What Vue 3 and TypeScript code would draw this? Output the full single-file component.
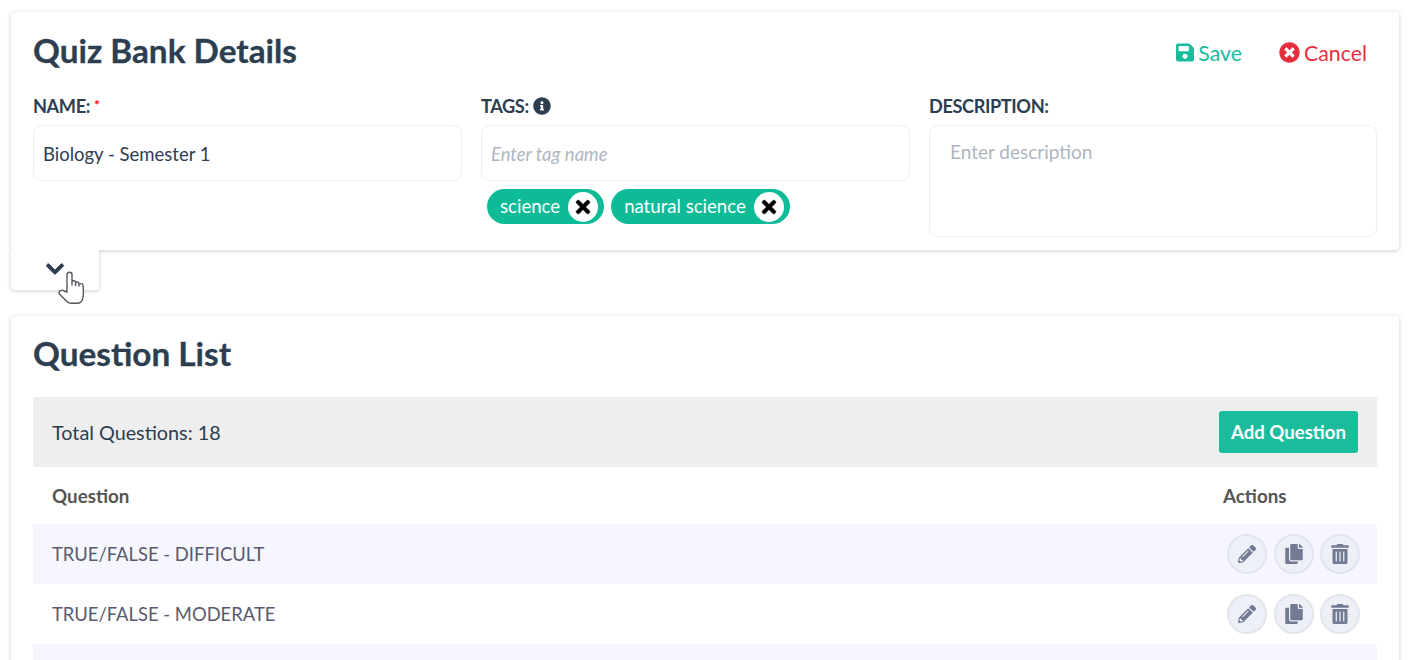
<script setup lang="ts">
const icons = {
  pencil: { vb: '0 0 512 512', d: 'M497.9 142.1l-46.1 46.1c-4.7 4.7-12.3 4.7-17 0l-111-111c-4.7-4.7-4.7-12.3 0-17l46.1-46.1c18.7-18.7 49.1-18.7 67.9 0l60.1 60.1c18.8 18.7 18.8 49.1 0 67.9zM284.2 99.8L21.6 362.4.4 483.9c-2.9 16.4 11.4 30.6 27.8 27.8l121.5-21.3 262.6-262.6c4.7-4.7 4.7-12.3 0-17l-111-111c-4.8-4.7-12.4-4.7-17.1 0zM124.1 339.9c-5.5-5.5-5.5-14.3 0-19.8l154-154c5.5-5.5 14.3-5.5 19.8 0s5.5 14.3 0 19.8l-154 154c-5.5 5.5-14.3 5.5-19.8 0zM88 424h48v36.3l-64.5 11.3-31.1-31.1L51.7 376H88v48z' },
  copy: { vb: '0 0 448 512', d: 'M320 448v40c0 13.255-10.745 24-24 24H24c-13.255 0-24-10.745-24-24V120c0-13.255 10.745-24 24-24h72v296c0 30.879 25.121 56 56 56h168zm0-344V0H152c-13.255 0-24 10.745-24 24v368c0 13.255 10.745 24 24 24h272c13.255 0 24-10.745 24-24V128H344c-13.2 0-24-10.8-24-24zm120.971-31.029L375.029 7.029A24 24 0 0 0 358.059 0H352v96h96v-6.059a24 24 0 0 0-7.029-16.97z' },
  trash: { vb: '0 0 448 512', d: 'M32 464a48 48 0 0 0 48 48h288a48 48 0 0 0 48-48V128H32zm272-256a16 16 0 0 1 32 0v224a16 16 0 0 1-32 0zm-96 0a16 16 0 0 1 32 0v224a16 16 0 0 1-32 0zm-96 0a16 16 0 0 1 32 0v224a16 16 0 0 1-32 0zM432 32H312l-9.4-18.7A24 24 0 0 0 281.1 0H166.8a23.72 23.72 0 0 0-21.4 13.3L136 32H16A16 16 0 0 0 0 48v32a16 16 0 0 0 16 16h416a16 16 0 0 0 16-16V48a16 16 0 0 0-16-16z' },
}
const actions = [icons.pencil, icons.copy, icons.trash]
const times = 'M242.72 256l100.07-100.07c12.28-12.28 12.28-32.19 0-44.48l-22.24-22.24c-12.28-12.28-32.19-12.28-44.48 0L176 189.28 75.93 89.21c-12.28-12.28-32.19-12.28-44.48 0L9.21 111.45c-12.28 12.28-12.28 32.19 0 44.48L109.28 256 9.21 356.07c-12.28 12.28-12.28 32.19 0 44.48l22.24 22.24c12.28 12.28 32.2 12.28 44.48 0L176 322.72l100.07 100.07c12.28 12.28 32.2 12.28 44.48 0l22.24-22.24c12.28-12.28 12.28-32.19 0-44.48L242.72 256z'
const tags: string[] = ['science', 'natural science']
const rows: string[] = ['TRUE/FALSE - DIFFICULT', 'TRUE/FALSE - MODERATE']
</script>

<template>
  <div class="page">
    <section class="card details">
      <header class="head">
        <h1>Quiz Bank Details</h1>
        <div class="head-actions">
          <a class="link save">
            <svg viewBox="0 0 448 512" class="ico"><path d="M433.941 129.941l-83.882-83.882A48 48 0 0 0 316.118 32H48C21.49 32 0 53.49 0 80v352c0 26.51 21.49 48 48 48h352c26.51 0 48-21.49 48-48V163.882a48 48 0 0 0-14.059-33.941zM224 416c-35.346 0-64-28.654-64-64 0-35.346 28.654-64 64-64s64 28.654 64 64c0 35.346-28.654 64-64 64zm96-304.52V212c0 6.627-5.373 12-12 12H76c-6.627 0-12-5.373-12-12V108c0-6.627 5.373-12 12-12h228.52c3.183 0 6.235 1.264 8.485 3.515l3.48 3.48A11.996 11.996 0 0 1 320 111.48z"/></svg>
            Save
          </a>
          <a class="link cancel">
            <svg viewBox="0 0 512 512" class="ico"><path d="M256 8C119 8 8 119 8 256s111 248 248 248 248-111 248-248S393 8 256 8zm121.6 313.1c4.7 4.7 4.7 12.3 0 17L338 377.6c-4.7 4.7-12.3 4.7-17 0L256 312l-65.1 65.6c-4.7 4.7-12.3 4.7-17 0L134.4 338c-4.7-4.7-4.7-12.3 0-17l65.6-65-65.6-65.1c-4.7-4.7-4.7-12.3 0-17l39.6-39.6c4.7-4.7 12.3-4.7 17 0l65 65.7 65.1-65.6c4.7-4.7 12.3-4.7 17 0l39.6 39.6c4.7 4.7 4.7 12.3 0 17L312 256l65.6 65.1z"/></svg>
            Cancel
          </a>
        </div>
      </header>
      <div class="fields">
        <div class="field">
          <label>NAME:<span class="req">*</span></label>
          <div class="input">Biology - Semester 1</div>
        </div>
        <div class="field">
          <label>TAGS:
            <svg viewBox="0 0 512 512" class="info"><path d="M256 8C119.043 8 8 119.083 8 256c0 136.997 111.043 248 248 248s248-111.003 248-248C504 119.083 392.957 8 256 8zm0 110c23.196 0 42 18.804 42 42s-18.804 42-42 42-42-18.804-42-42 18.804-42 42-42zm56 254c0 6.627-5.373 12-12 12h-88c-6.627 0-12-5.373-12-12v-24c0-6.627 5.373-12 12-12h12v-64h-12c-6.627 0-12-5.373-12-12v-24c0-6.627 5.373-12 12-12h64c6.627 0 12 5.373 12 12v100h12c6.627 0 12 5.373 12 12v24z"/></svg>
          </label>
          <div class="input placeholder">Enter tag name</div>
          <div class="tags">
            <span v-for="t in tags" :key="t" class="tag">
              {{ t }}
              <span class="tag-x"><svg viewBox="0 0 352 512"><path :d="times"/></svg></span>
            </span>
          </div>
        </div>
        <div class="field last">
          <label>DESCRIPTION:</label>
          <div class="textarea">Enter description</div>
        </div>
      </div>
    </section>
    <div class="tab-row">
      <button class="tab">
        <svg viewBox="0 0 448 512"><path d="M207.029 381.476L12.686 187.132c-9.373-9.373-9.373-24.569 0-33.941l22.667-22.667c9.357-9.357 24.522-9.375 33.901-.04L224 284.505l154.745-154.021c9.379-9.335 24.544-9.317 33.901.04l22.667 22.667c9.373 9.373 9.373 24.569 0 33.941L240.971 381.476c-9.373 9.372-24.569 9.372-33.942 0z"/></svg>
      </button>
      <svg class="cursor" viewBox="0 0 26 33">
        <path d="M9 21 V3.5 C9 .4 14 .4 14 3.5 V14 V11.2 C14 9.2 17.6 9.2 17.6 11.2 V14.5 V12.4 C17.6 10.5 21 10.5 21 12.6 V15 V14 C21 12.2 25 12.2 25 14.2 C25.4 18 25.6 21 25.2 24.5 C25 26.5 24.8 27.6 24.2 29 C23.4 31.2 21.6 32.2 19.4 32.2 H13 C11 32.2 9.6 31.4 8.4 30 L1.6 23.2 C-.4 20.8 3.6 17.8 6 20 Z" fill="#fff" stroke="#55585f" stroke-width="1.4" stroke-linejoin="round"/>
      </svg>
    </div>
    <section class="card list">
      <h1>Question List</h1>
      <div class="toolbar">
        <span>Total Questions: 18</span>
        <button class="add">Add Question</button>
      </div>
      <div class="thead">
        <span>Question</span>
        <span class="actions-h">Actions</span>
      </div>
      <div v-for="r in rows" :key="r" class="row">
        <span>{{ r }}</span>
        <div class="actions">
          <span v-for="(a, i) in actions" :key="i" class="round">
            <svg :viewBox="a.vb"><path :d="a.d"/></svg>
          </span>
        </div>
      </div>
      <div class="row"></div>
    </section>
  </div>
</template>

<style>
html, body { margin: 0; background: #fff; overflow: hidden; height: 660px; }
</style>

<style scoped>
.page {
  box-sizing: border-box;
  height: 660px;
  overflow: hidden;
  padding: 12px 11px 0;
  font-family: Lato, sans-serif;
  color: #2c3e50;
}
.card {
  background: #fff;
  border-radius: 3px;
  box-shadow: 0 1px 4px rgba(0, 0, 0, 0.2);
  padding: 0 22px;
}
.details { height: 238px; box-sizing: border-box; position: relative; z-index: 1; }
.head { display: flex; justify-content: space-between; align-items: center; height: 80px; padding-bottom: 4px; box-sizing: border-box; }
h1 { margin: 0; font-size: 33.3px; font-weight: 700; line-height: 40px; color: #2c3e50; -webkit-text-stroke: 0.3px #2c3e50; }
.head-actions { display: flex; gap: 37px; padding-right: 10px; margin-top: 5px; }
.link { display: flex; align-items: center; gap: 4px; font-size: 21.3px; line-height: 28px; }
.save { color: #1abc9c; }
.cancel { color: #e52f3f; }
.ico { width: 21px; height: 21px; fill: currentColor; }
.save .ico { width: 18px; }
.fields { display: grid; grid-template-columns: repeat(3, 1fr); }
.field { padding-right: 19px; }
.field.last { padding-right: 0; }
label { display: flex; align-items: center; gap: 4px; height: 27px; font-size: 18.2px; font-weight: 700; letter-spacing: -0.4px; color: #2c3e50; margin-bottom: 6px; white-space: pre; }
.req { color: #f00; font-size: 14px; margin-top: -3px; }
.info { width: 18px; height: 18px; fill: #2c3e50; margin-left: -4px; }
.input {
  box-sizing: border-box;
  height: 56px;
  border: 1px solid #edf0f2;
  border-radius: 8px;
  padding: 2px 9px 0;
  display: flex;
  align-items: center;
  font-size: 18.5px;
  color: #2c3e50;
}
.placeholder { font-style: italic; color: #aeb6bf; }
.textarea {
  box-sizing: border-box;
  height: 112px;
  border: 1px solid #edf0f2;
  border-radius: 8px;
  padding: 14px 20px;
  font-size: 19px;
  line-height: 24px;
  color: #aeb6bf;
}
.tags { display: flex; gap: 7px; margin: 8px 0 0 6px; }
.tag {
  display: flex;
  align-items: center;
  justify-content: space-between;
  box-sizing: border-box;
  height: 35px;
  gap: 8px;
  padding: 0 6px 2px 13px;
  background: #0dbb97;
  border-radius: 18px;
  color: #fff;
  font-size: 18.6px;
}
.tag-x { width: 30px; height: 30px; margin-bottom: -2px; background: #fff; border-radius: 50%; display: flex; align-items: center; justify-content: center; }
.tag-x svg { width: 16px; height: 20px; fill: #000; stroke: #000; stroke-width: 16; }
.tab-row { position: relative; height: 66px; }
.tab {
  display: flex;
  justify-content: center;
  width: 88px;
  height: 40px;
  padding: 9px 0 0;
  border: 0;
  background: #fff;
  border-radius: 0 0 3px 3px;
  box-shadow: 0 1px 4px rgba(0, 0, 0, 0.2);
  position: relative;
  z-index: 2;
  clip-path: inset(0 -6px -6px -6px);
}
.tab svg { width: 18px; height: 20px; fill: #2c3e50; stroke: #2c3e50; stroke-width: 24; }
.cursor { position: absolute; left: 47px; top: 21px; width: 26px; height: 33px; z-index: 3; }
.list h1 { padding-top: 17px; height: 64px; }
.toolbar {
  display: flex;
  justify-content: space-between;
  align-items: center;
  height: 70px;
  padding: 0 19px;
  background: #eee;
  font-size: 19.8px;
  color: #2c3e50;
}
.add {
  height: 42px;
  width: 139px;
  padding: 0;
  border: 0;
  border-radius: 3px;
  background: #1abc9c;
  color: #fff;
  font-family: Lato, sans-serif;
  font-size: 18.6px;
  font-weight: 700;
}
.thead, .row {
  display: flex;
  justify-content: space-between;
  align-items: center;
  padding: 0 19px;
}
.thead { height: 57px; font-size: 18.8px; font-weight: 700; color: #555; }
.actions-h { width: 135px; }
.row { height: 60px; font-size: 18.4px; color: #5a5a6e; }
.row:nth-child(even) { background: #f6f7fe; }
.row:nth-child(odd) { background: #fff; }
.actions { display: flex; gap: 6.5px; margin-right: -2px; }
.round {
  box-sizing: border-box;
  width: 40px;
  height: 40px;
  border-radius: 50%;
  background: #edf1f7;
  border: 2px solid #e3e5ea;
  display: flex;
  align-items: center;
  justify-content: center;
}
.round svg { width: 18px; height: 20px; fill: #737a94; }
</style>
